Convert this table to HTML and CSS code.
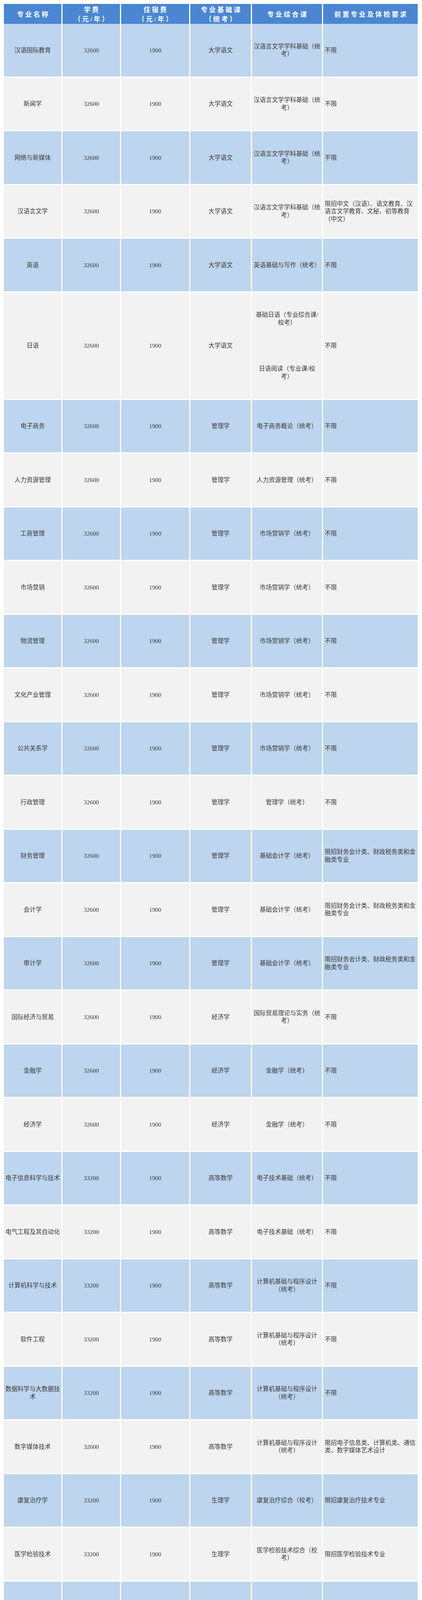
FILE: index.html
```html
<!DOCTYPE html>
<html lang="zh-CN">
<head>
<meta charset="utf-8">
<title>专业学费表</title>
<link rel="stylesheet" href="styles.css">
</head>
<body>
<div class="table">
  <div class="row head">
    <div class="c">专业名称</div>
    <div class="c">学费<br>（元/年）</div>
    <div class="c">住宿费<br>（元/年）</div>
    <div class="c">专业基础课<br>（统考）</div>
    <div class="c">专业综合课</div>
    <div class="c">前置专业及体检要求</div>
  </div>

  <div class="row b">
    <div class="c">汉语国际教育</div><div class="c">32600</div><div class="c">1900</div><div class="c">大学语文</div><div class="c">汉语言文学学科基础（统<br>考）</div><div class="c req">不限</div>
  </div>
  <div class="row g">
    <div class="c">新闻学</div><div class="c">32600</div><div class="c">1900</div><div class="c">大学语文</div><div class="c">汉语言文学学科基础（统<br>考）</div><div class="c req">不限</div>
  </div>
  <div class="row b">
    <div class="c">网络与新媒体</div><div class="c">32600</div><div class="c">1900</div><div class="c">大学语文</div><div class="c">汉语言文学学科基础（统<br>考）</div><div class="c req">不限</div>
  </div>
  <div class="row g">
    <div class="c">汉语言文学</div><div class="c">32600</div><div class="c">1900</div><div class="c">大学语文</div><div class="c">汉语言文学学科基础（统<br>考）</div><div class="c req">限招中文（汉语）、语文教育、汉<br>语言文学教育、文秘、初等教育<br>（中文）</div>
  </div>
  <div class="row b">
    <div class="c">英语</div><div class="c">32600</div><div class="c">1900</div><div class="c">大学语文</div><div class="c">英语基础与写作（统考）</div><div class="c req">不限</div>
  </div>
  <div class="row g double">
    <div class="c">日语</div><div class="c">32600</div><div class="c">1900</div><div class="c">大学语文</div>
    <div class="c stack"><p class="blk">基础日语（专业综合课/<br>校考）</p><p class="blk">日语阅读（专业课/校<br>考）</p></div>
    <div class="c req">不限</div>
  </div>
  <div class="row b">
    <div class="c">电子商务</div><div class="c">32600</div><div class="c">1900</div><div class="c">管理学</div><div class="c">电子商务概论（统考）</div><div class="c req">不限</div>
  </div>
  <div class="row g">
    <div class="c">人力资源管理</div><div class="c">32600</div><div class="c">1900</div><div class="c">管理学</div><div class="c">人力资源管理（统考）</div><div class="c req">不限</div>
  </div>
  <div class="row b">
    <div class="c">工商管理</div><div class="c">32600</div><div class="c">1900</div><div class="c">管理学</div><div class="c">市场营销学（统考）</div><div class="c req">不限</div>
  </div>
  <div class="row g">
    <div class="c">市场营销</div><div class="c">32600</div><div class="c">1900</div><div class="c">管理学</div><div class="c">市场营销学（统考）</div><div class="c req">不限</div>
  </div>
  <div class="row b">
    <div class="c">物流管理</div><div class="c">32600</div><div class="c">1900</div><div class="c">管理学</div><div class="c">市场营销学（统考）</div><div class="c req">不限</div>
  </div>
  <div class="row g">
    <div class="c">文化产业管理</div><div class="c">32600</div><div class="c">1900</div><div class="c">管理学</div><div class="c">市场营销学（统考）</div><div class="c req">不限</div>
  </div>
  <div class="row b">
    <div class="c">公共关系学</div><div class="c">32600</div><div class="c">1900</div><div class="c">管理学</div><div class="c">市场营销学（统考）</div><div class="c req">不限</div>
  </div>
  <div class="row g">
    <div class="c">行政管理</div><div class="c">32600</div><div class="c">1900</div><div class="c">管理学</div><div class="c">管理学（统考）</div><div class="c req">不限</div>
  </div>
  <div class="row b">
    <div class="c">财务管理</div><div class="c">32600</div><div class="c">1900</div><div class="c">管理学</div><div class="c">基础会计学（统考）</div><div class="c req">限招财务会计类、财政税务类和金<br>融类专业</div>
  </div>
  <div class="row g">
    <div class="c">会计学</div><div class="c">32600</div><div class="c">1900</div><div class="c">管理学</div><div class="c">基础会计学（统考）</div><div class="c req">限招财务会计类、财政税务类和金<br>融类专业</div>
  </div>
  <div class="row b">
    <div class="c">审计学</div><div class="c">32600</div><div class="c">1900</div><div class="c">管理学</div><div class="c">基础会计学（统考）</div><div class="c req">限招财务会计类、财政税务类和金<br>融类专业</div>
  </div>
  <div class="row g">
    <div class="c">国际经济与贸易</div><div class="c">32600</div><div class="c">1900</div><div class="c">经济学</div><div class="c">国际贸易理论与实务（统<br>考）</div><div class="c req">不限</div>
  </div>
  <div class="row b">
    <div class="c">金融学</div><div class="c">32600</div><div class="c">1900</div><div class="c">经济学</div><div class="c">金融学（统考）</div><div class="c req">不限</div>
  </div>
  <div class="row g">
    <div class="c">经济学</div><div class="c">32600</div><div class="c">1900</div><div class="c">经济学</div><div class="c">金融学（统考）</div><div class="c req">不限</div>
  </div>
  <div class="row b">
    <div class="c">电子信息科学与技术</div><div class="c">33200</div><div class="c">1900</div><div class="c">高等数学</div><div class="c">电子技术基础（统考）</div><div class="c req">不限</div>
  </div>
  <div class="row g">
    <div class="c">电气工程及其自动化</div><div class="c">33200</div><div class="c">1900</div><div class="c">高等数学</div><div class="c">电子技术基础（统考）</div><div class="c req">不限</div>
  </div>
  <div class="row b">
    <div class="c">计算机科学与技术</div><div class="c">33200</div><div class="c">1900</div><div class="c">高等数学</div><div class="c">计算机基础与程序设计<br>（统考）</div><div class="c req">不限</div>
  </div>
  <div class="row g">
    <div class="c">软件工程</div><div class="c">33200</div><div class="c">1900</div><div class="c">高等数学</div><div class="c">计算机基础与程序设计<br>（统考）</div><div class="c req">不限</div>
  </div>
  <div class="row b">
    <div class="c">数据科学与大数据技<br>术</div><div class="c">33200</div><div class="c">1900</div><div class="c">高等数学</div><div class="c">计算机基础与程序设计<br>（统考）</div><div class="c req">不限</div>
  </div>
  <div class="row g">
    <div class="c">数字媒体技术</div><div class="c">32600</div><div class="c">1900</div><div class="c">高等数学</div><div class="c">计算机基础与程序设计<br>（统考）</div><div class="c req">限招电子信息类、计算机类、通信<br>类、数字媒体艺术设计</div>
  </div>
  <div class="row b">
    <div class="c">康复治疗学</div><div class="c">33200</div><div class="c">1900</div><div class="c">生理学</div><div class="c">康复治疗综合（校考）</div><div class="c req">限招康复治疗技术专业</div>
  </div>
  <div class="row g">
    <div class="c">医学检验技术</div><div class="c">33200</div><div class="c">1900</div><div class="c">生理学</div><div class="c">医学检验技术综合（校<br>考）</div><div class="c req">限招医学检验技术专业</div>
  </div>
  <div class="row b">
    <div class="c">中药学</div><div class="c">33200</div><div class="c">1900</div><div class="c">生理学</div><div class="c">中药学（校考）</div><div class="c req">前置专业要求为中药学/药学相关<br>专业，不招收色盲考生</div>
  </div>
  <div class="row g">
    <div class="c">中药制药</div><div class="c">33200</div><div class="c">1900</div><div class="c">生理学</div><div class="c">中药学（校考）</div><div class="c req">前置专业要求为中药学/药学相关<br>专业，不招收色盲考生</div>
  </div>
  <div class="row b">
    <div class="c">健康服务与管理</div><div class="c">33200</div><div class="c">1900</div><div class="c">生理学</div><div class="c">健康服务与管理（校考）</div><div class="c req">前置专业要求为公共卫生与卫生管<br>理类、健康管理与促进类、中医药<br>类、医学类、护理学、康复学</div>
  </div>
  <div class="row g">
    <div class="c">音乐学</div><div class="c">40500</div><div class="c">1900</div><div class="c">艺术概论</div><div class="c">音乐基础理论+专业现场<br>测试（校考）</div><div class="c req">限招音乐类相关专业考生</div>
  </div>
  <div class="row b">
    <div class="c">艺术设计学</div><div class="c">35000</div><div class="c">1900</div><div class="c">艺术概论</div><div class="c">设计基础（统考）</div><div class="c req">限招艺术设计类、文化创意与策划<br>、摄影摄像技术、广告策划与营销<br>、包装策划与设计，不招收色盲考<br>生</div>
  </div>
  <div class="row g">
    <div class="c">公共艺术</div><div class="c">35000</div><div class="c">1900</div><div class="c">艺术概论</div><div class="c">设计基础（统考）</div><div class="c req">限招艺术设计类、城乡规划、建筑<br>室内设计、风景园林设计、会展策<br>划与管理、民族美术、家居设计与<br>制造、建筑设计，不招收色盲考生</div>
  </div>
  <div class="row b">
    <div class="c">数字媒体艺术</div><div class="c">35000</div><div class="c">1900</div><div class="c">艺术概论</div><div class="c">设计基础（统考）</div><div class="c req">限招广播影视类、艺术设计类、动<br>漫制作技术、数字媒体应用技术，<br>不招收色盲考生</div>
  </div>
</div>
</body>
</html>
```

FILE: styles.css
```css
html, body {
  margin: 0;
  padding: 0;
  background: #ffffff;
}

body {
  font-family: "Liberation Serif", "Noto Sans CJK SC", serif;
}

.table {
  display: flex;
  flex-direction: column;
  gap: 3px;
  width: 1059px;
  padding: 10px 0 0 10px;
}

.row {
  display: grid;
  grid-template-columns: 147px 147px 174px 155px 179px 242px;
  column-gap: 3px;
  height: 134.5px;
}

.row.double {
  height: 272px;
}

.c {
  display: flex;
  align-items: center;
  justify-content: center;
  text-align: center;
  padding: 0 2px;
  font-size: 15.5px;
  line-height: 19.5px;
  color: #3c3c3c;
  white-space: nowrap;
}

.row.b .c {
  background: #bdd5ee;
}

.row.g .c {
  background: #f2f2f2;
}

.req {
  justify-content: flex-start;
  text-align: left;
  padding: 0 0 0 4px;
}

.stack {
  flex-direction: column;
  gap: 99px;
}

.blk {
  margin: 0;
}

.row.head {
  height: 48px;
}

.row.head .c {
  background: #4a86d2;
  color: #ffffff;
  font-weight: bold;
  font-size: 17px;
  letter-spacing: 4px;
  line-height: 24px;
  padding: 4px 0 0 4px;
}
```
